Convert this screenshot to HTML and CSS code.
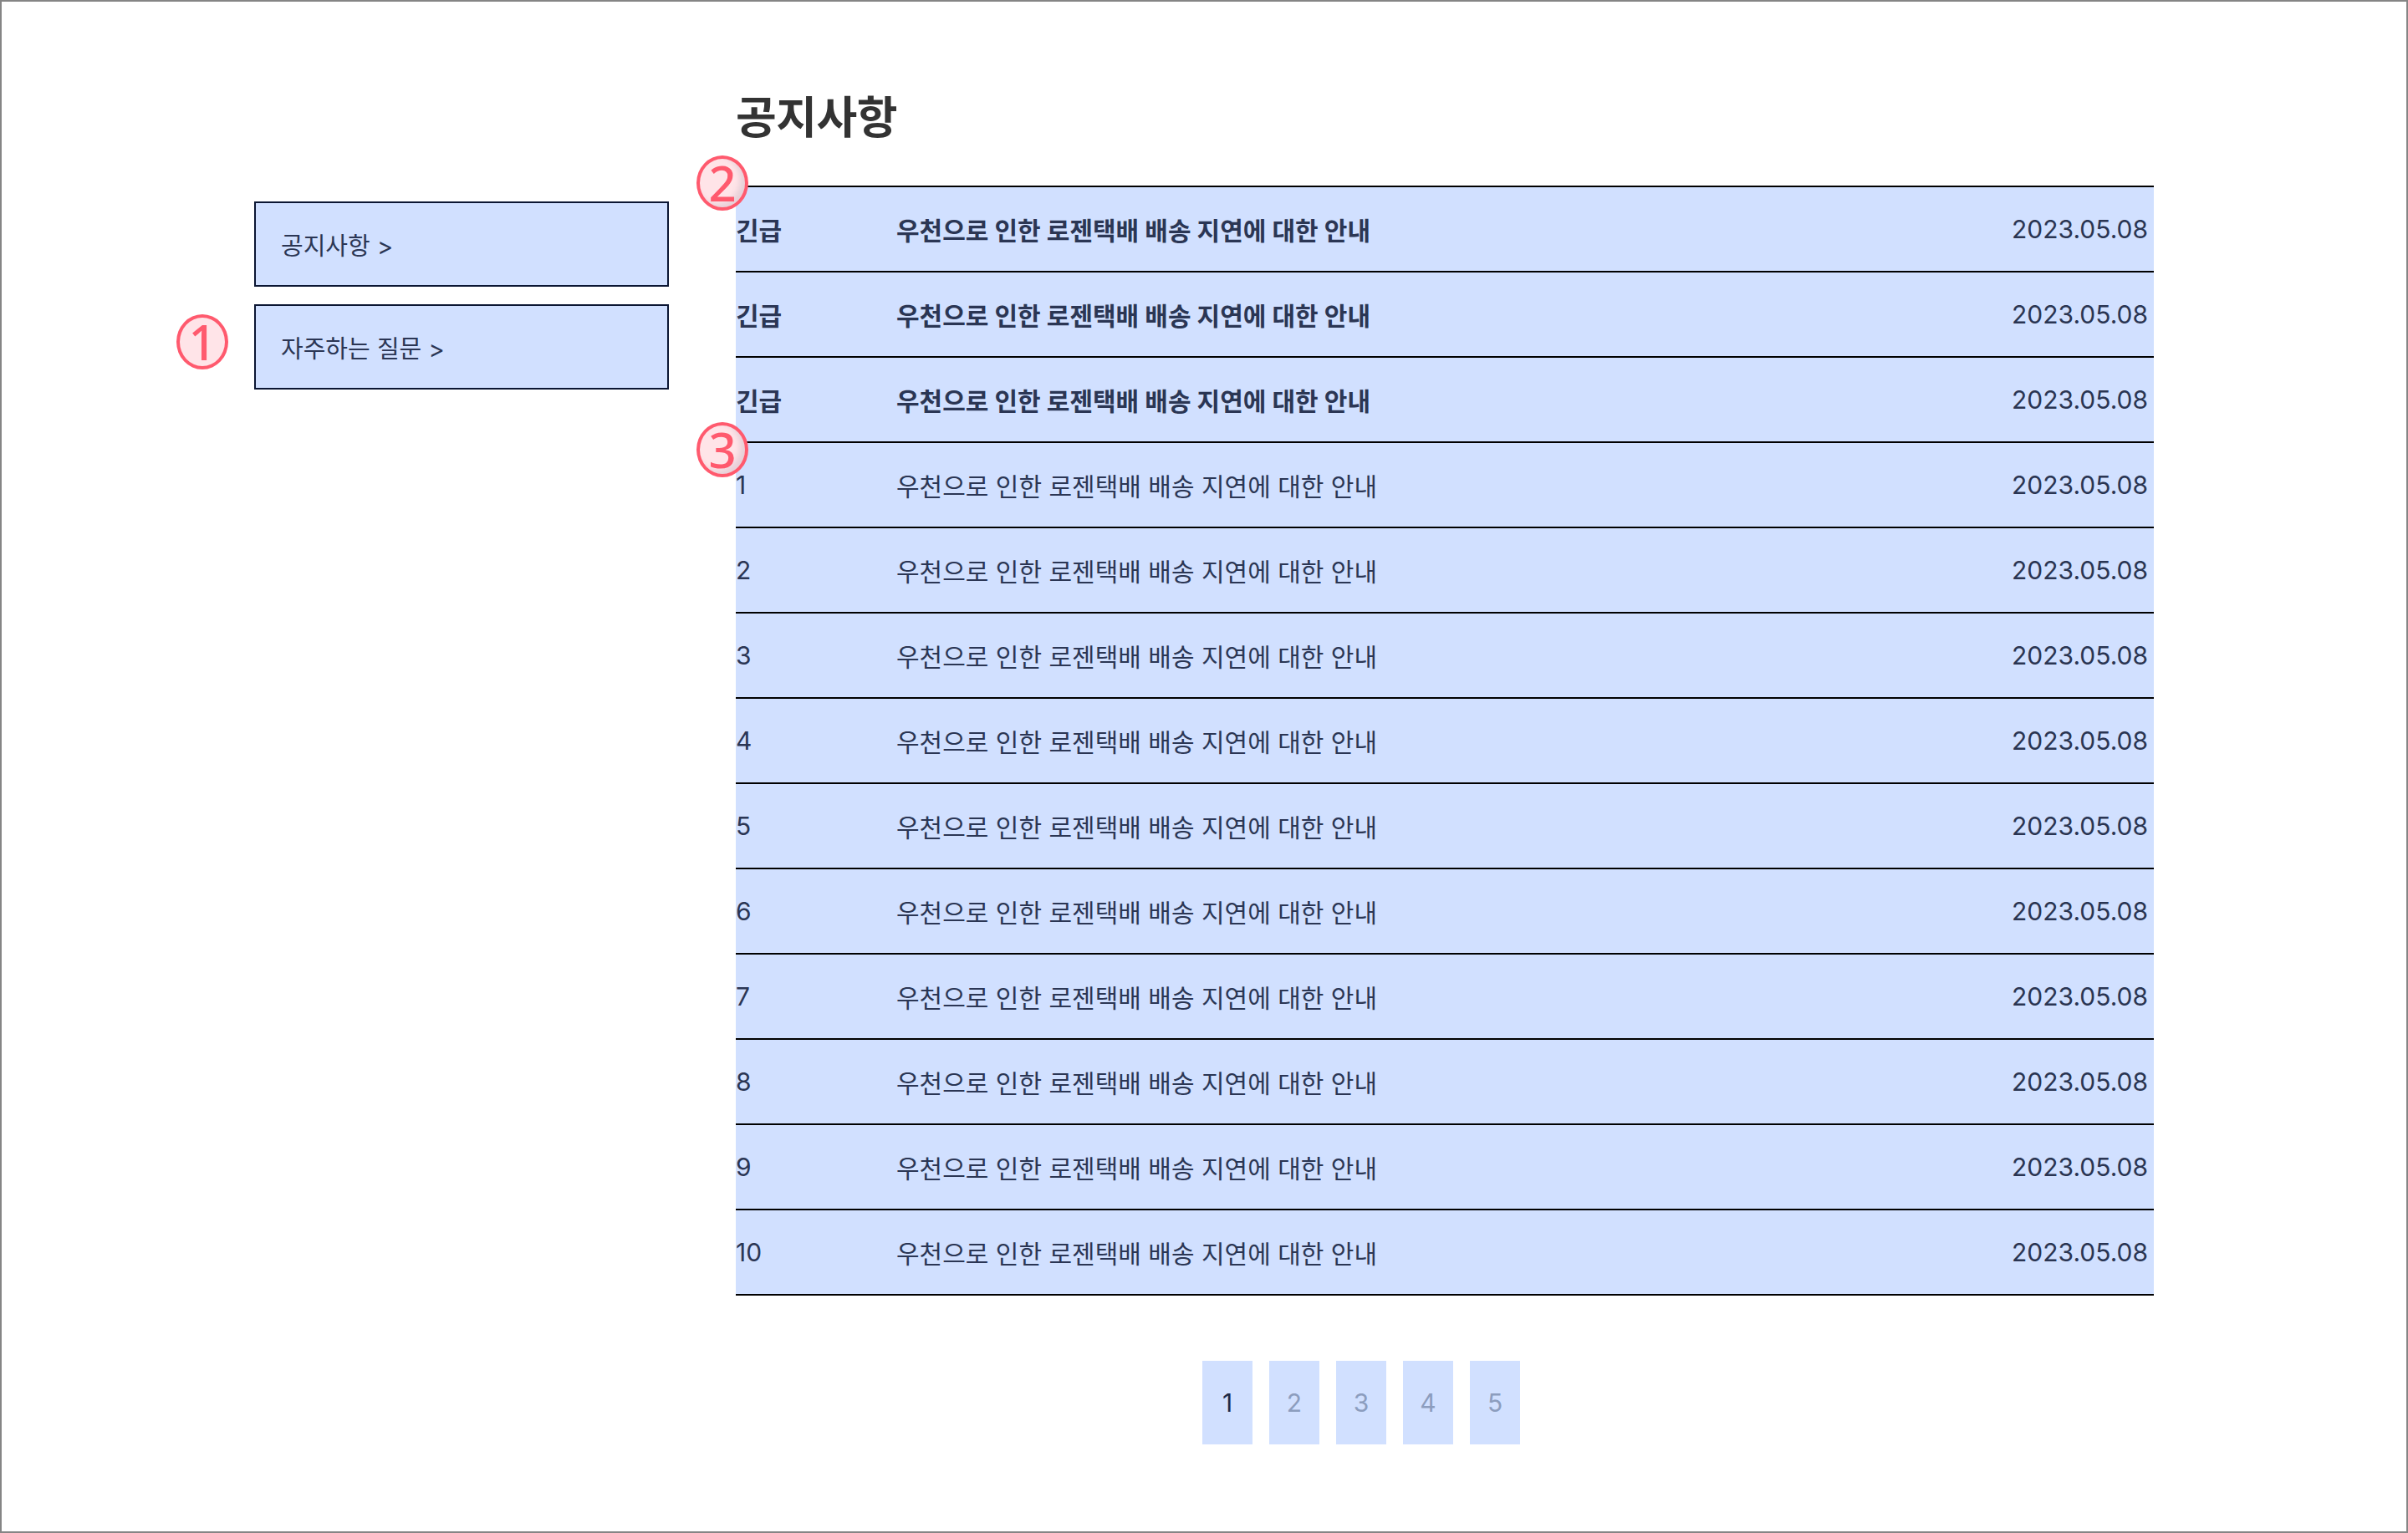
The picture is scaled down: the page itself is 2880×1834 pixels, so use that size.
FILE: index.html
```html
<!DOCTYPE html>
<html lang="ko">
<head>
<meta charset="utf-8">
<title>공지사항</title>
<link rel="stylesheet" href="styles.css">
</head>
<body>
<div class="page">
  <nav class="sidebar">
    <a class="side-item">공지사항 &gt;</a>
    <a class="side-item">자주하는 질문 &gt;</a>
  </nav>
  <main class="main">
    <h1 class="title">공지사항</h1>
    <div class="board">
      <div class="row urgent"><span class="num">긴급</span><span class="subject">우천으로 인한 로젠택배 배송 지연에 대한 안내</span><span class="date">2023.05.08</span></div>
      <div class="row urgent"><span class="num">긴급</span><span class="subject">우천으로 인한 로젠택배 배송 지연에 대한 안내</span><span class="date">2023.05.08</span></div>
      <div class="row urgent"><span class="num">긴급</span><span class="subject">우천으로 인한 로젠택배 배송 지연에 대한 안내</span><span class="date">2023.05.08</span></div>
      <div class="row"><span class="num">1</span><span class="subject">우천으로 인한 로젠택배 배송 지연에 대한 안내</span><span class="date">2023.05.08</span></div>
      <div class="row"><span class="num">2</span><span class="subject">우천으로 인한 로젠택배 배송 지연에 대한 안내</span><span class="date">2023.05.08</span></div>
      <div class="row"><span class="num">3</span><span class="subject">우천으로 인한 로젠택배 배송 지연에 대한 안내</span><span class="date">2023.05.08</span></div>
      <div class="row"><span class="num">4</span><span class="subject">우천으로 인한 로젠택배 배송 지연에 대한 안내</span><span class="date">2023.05.08</span></div>
      <div class="row"><span class="num">5</span><span class="subject">우천으로 인한 로젠택배 배송 지연에 대한 안내</span><span class="date">2023.05.08</span></div>
      <div class="row"><span class="num">6</span><span class="subject">우천으로 인한 로젠택배 배송 지연에 대한 안내</span><span class="date">2023.05.08</span></div>
      <div class="row"><span class="num">7</span><span class="subject">우천으로 인한 로젠택배 배송 지연에 대한 안내</span><span class="date">2023.05.08</span></div>
      <div class="row"><span class="num">8</span><span class="subject">우천으로 인한 로젠택배 배송 지연에 대한 안내</span><span class="date">2023.05.08</span></div>
      <div class="row"><span class="num">9</span><span class="subject">우천으로 인한 로젠택배 배송 지연에 대한 안내</span><span class="date">2023.05.08</span></div>
      <div class="row last"><span class="num">10</span><span class="subject">우천으로 인한 로젠택배 배송 지연에 대한 안내</span><span class="date">2023.05.08</span></div>
    </div>
    <div class="pager">
      <a class="page-btn active">1</a>
      <a class="page-btn">2</a>
      <a class="page-btn">3</a>
      <a class="page-btn">4</a>
      <a class="page-btn">5</a>
    </div>
  </main>
  <span class="marker m1">1</span>
  <span class="marker m2">2</span>
  <span class="marker m3">3</span>
</div>
</body>
</html>
```
FILE: styles.css
```css
* { box-sizing: border-box; }
html, body { margin: 0; padding: 0; }
body {
  width: 2880px;
  height: 1834px;
  border: 2px solid #858585;
  background: #ffffff;
  font-family: Inter, "Noto Sans CJK KR", sans-serif;
  color: #2b3654;
  overflow: hidden;
}
.page {
  position: relative;
  display: flex;
  align-items: flex-start;
  padding-left: 302px;
  gap: 80px;
}
.sidebar {
  width: 496px;
  margin-top: 239px;
  display: flex;
  flex-direction: column;
  gap: 21px;
}
.side-item {
  display: flex;
  align-items: center;
  height: 102px;
  padding-left: 30px;
  background: #d1e0ff;
  border: 2px solid #0b1633;
  font-size: 29px;
  color: #2b3654;
}
.main {
  width: 1696px;
  padding-top: 105px;
}
.title {
  margin: 0 0 47px 0;
  height: 68px;
  line-height: 68px;
  font-size: 53px;
  font-weight: 700;
  color: #333333;
  letter-spacing: -0.5px;
}
.board {
  border-bottom: 2px solid #000;
}
.row {
  display: grid;
  grid-template-columns: 192px 1fr auto;
  align-items: center;
  height: 102px;
  border-top: 2px solid #000;
  background: #d1e0ff;
  padding-right: 7px;
  font-size: 30px;
  color: #2b3654;
}
.row.urgent .num,
.row.urgent .subject { font-weight: 700; }
.date { font-size: 30px; color: #2a3552; }
.pager {
  display: flex;
  gap: 20px;
  margin-top: 78px;
  padding-left: 558px;
}
.page-btn {
  width: 60px;
  height: 100px;
  display: flex;
  align-items: center;
  justify-content: center;
  background: #d1e0ff;
  font-size: 30px;
  color: #8c9dbe;
}
.page-btn.active { color: #1f2b48; }
.marker {
  position: absolute;
  width: 62px;
  height: 66px;
  border-radius: 50%;
  border: 4px solid #ff5a6e;
  background: #ffe4e8;
  color: #ff5a6e;
  font-family: "Noto Sans", sans-serif;
  font-size: 58px;
  font-weight: 500;
  line-height: 58px;
  text-align: center;
}
.m1 { left: 209px; top: 374px; }
.m2 { left: 831px; top: 184px; box-shadow: inset -6px -4px 6px rgba(160,150,170,0.25); }
.m3 { left: 831px; top: 503px; box-shadow: inset -6px -4px 6px rgba(160,150,170,0.25); }
```
